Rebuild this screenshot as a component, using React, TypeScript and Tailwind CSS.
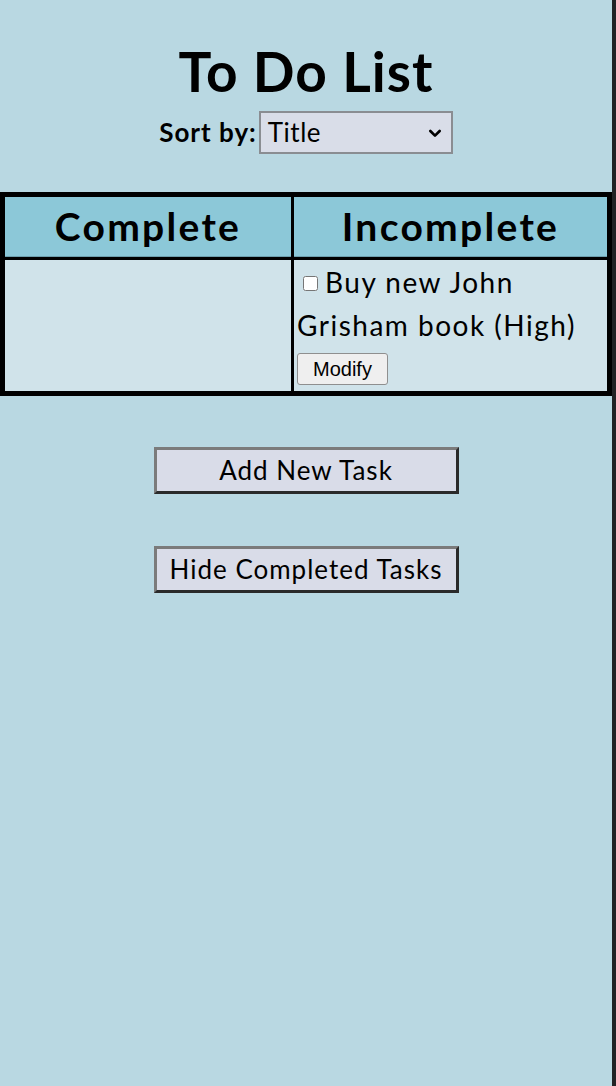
import React from 'react';

const sans = "font-['Lato','Noto_Sans',sans-serif]";

const tasks = [{ title: 'Buy new John Grisham book', priority: 'High' }];

const ChevronDown = () => (
  <svg viewBox="0 0 24 24" className="h-[16px] w-[16px]" fill="none" stroke="currentColor" strokeWidth={4} strokeLinecap="round" strokeLinejoin="round">
    <path d="M5 9l7 7 7-7" />
  </svg>
);

export default function App() {
  return (
    <div className={`flex min-h-[1086px] w-full ${sans}`}>
      <main className="flex w-[612px] flex-col items-center bg-[#b9d8e2] text-black">
        {/* title + sort */}
        <h1 className="mt-[39px] text-[55px] font-bold leading-[64px] tracking-[1px]">To Do List</h1>
        <div className="mt-[8px] flex items-center">
          <label className="text-[26px] font-bold tracking-[1px]">Sort by:</label>
          <div className="ml-[2px] flex h-[43px] w-[194px] items-center justify-between border-2 border-[#8a8d92] bg-[#d9dde8] pl-[7px] pr-[8px]">
            <span className="text-[26px] tracking-[0.5px]">Title</span>
            <ChevronDown />
          </div>
        </div>

        {/* table */}
        <div className="mt-[38px] grid w-full grid-cols-[286px_313px] gap-[3px] bg-black p-[5px]">
          <div className="flex h-[60px] items-center justify-center border-b border-[#6d9fad] bg-[#8cc8d8] text-[39px] font-bold tracking-[2.3px]">Complete</div>
          <div className="flex h-[60px] items-center justify-center border-b border-[#6d9fad] bg-[#8cc8d8] text-[39px] font-bold tracking-[2.3px]">Incomplete</div>
          <div className="h-[131px] bg-[#d0e3ea]" />
          <div className="h-[131px] bg-[#d0e3ea] px-[3px] pt-[1px]">
            {tasks.map((t) => (
              <div key={t.title}>
                <p className="w-[300px] text-[28px] leading-[43px] tracking-[1.5px]">
                  <input type="checkbox" className="mb-[4px] ml-[6px] mr-[7px] h-[15px] w-[15px] align-middle" />
                  {t.title} ({t.priority})
                </p>
                <button className="mt-[6px] rounded-[3px] border border-[#8f8f8f] bg-[#efefef] px-[15px] py-[2px] font-['Liberation_Sans',Arial,sans-serif] text-[20px] leading-[26px]">
                  Modify
                </button>
              </div>
            ))}
          </div>
        </div>

        {/* actions */}
        <button className="mt-[51px] h-[47px] w-[305px] border-[3px] border-t-[#7b7b7b] border-l-[#7b7b7b] border-b-[#2a2a2a] border-r-[#2a2a2a] bg-[#d9dce8] text-[26px] tracking-[1px]">
          Add New Task
        </button>
        <button className="mt-[52px] h-[47px] w-[305px] border-[3px] border-t-[#7b7b7b] border-l-[#7b7b7b] border-b-[#2a2a2a] border-r-[#2a2a2a] bg-[#d9dce8] text-[26px] tracking-[1px]">
          Hide Completed Tasks
        </button>
      </main>
      <div className="w-[4px] bg-[#222325]" />
    </div>
  );
}
